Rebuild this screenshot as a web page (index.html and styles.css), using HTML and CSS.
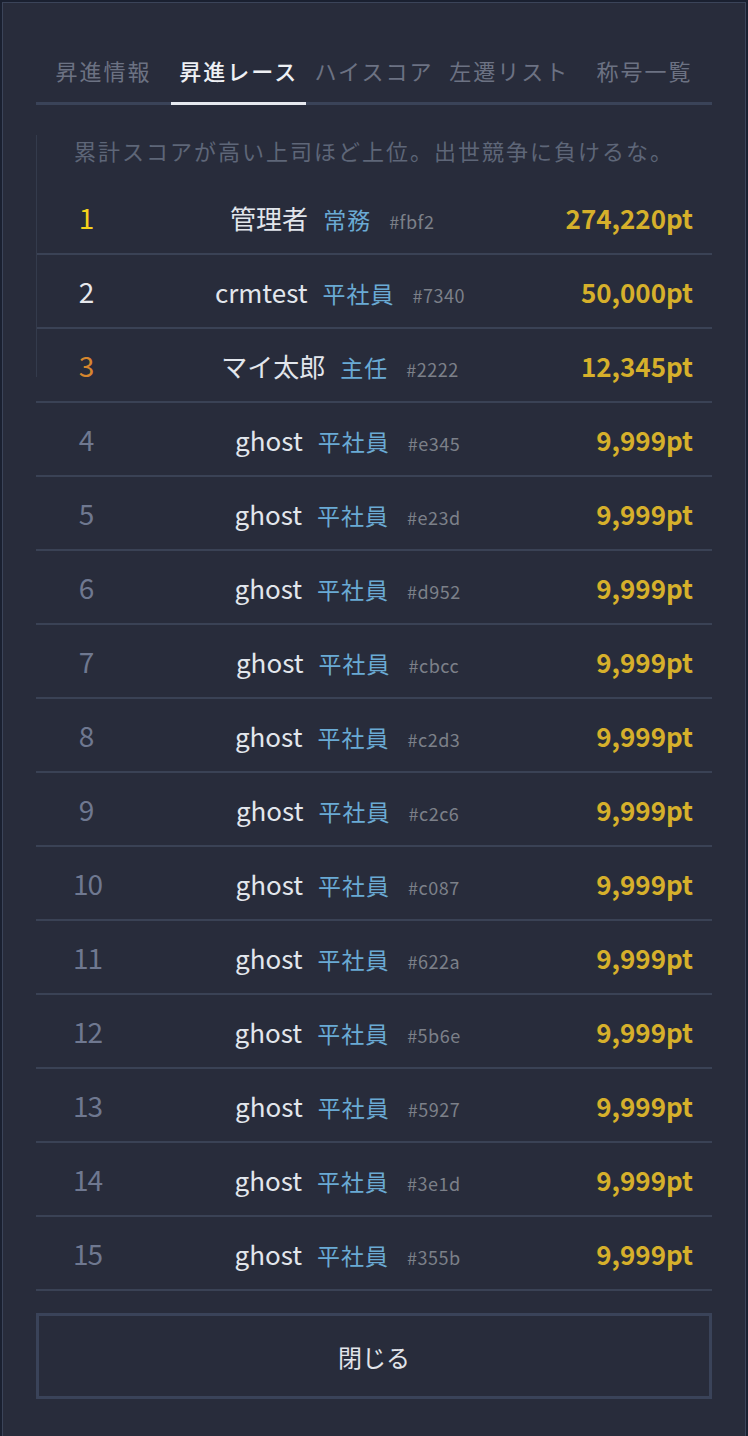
FILE: index.html
```html
<!DOCTYPE html>
<html>
<head>
  <meta charset="utf-8">
  <title>昇進レース</title>
  <meta name="viewport" content="width=device-width, initial-scale=1">
<link rel="stylesheet" href="styles.css">
</head>
<body>
<div class="modal">
  <!-- tabs -->
  <div class="tabs">
    <div class="tab">昇進情報</div>
    <div class="tab tab-active">昇進レース</div>
    <div class="tab">ハイスコア</div>
    <div class="tab">左遷リスト</div>
    <div class="tab">称号一覧</div>
  </div>

  <div class="board">
    <div class="board-desc">累計スコアが高い上司ほど上位。出世競争に負けるな。</div>

    <div class="race-row">
      <div class="rank rank-1">1</div>
      <div class="who"><span class="name">管理者</span><span class="role">常務</span><span class="tag">#fbf2</span></div>
      <div class="score">274,220pt</div>
    </div>
    <div class="race-row">
      <div class="rank rank-2">2</div>
      <div class="who"><span class="name">crmtest</span><span class="role">平社員</span><span class="tag">#7340</span></div>
      <div class="score">50,000pt</div>
    </div>
    <div class="race-row">
      <div class="rank rank-3">3</div>
      <div class="who"><span class="name">マイ太郎</span><span class="role">主任</span><span class="tag">#2222</span></div>
      <div class="score">12,345pt</div>
    </div>
    <div class="race-row">
      <div class="rank">4</div>
      <div class="who"><span class="name">ghost</span><span class="role">平社員</span><span class="tag">#e345</span></div>
      <div class="score">9,999pt</div>
    </div>
    <div class="race-row">
      <div class="rank">5</div>
      <div class="who"><span class="name">ghost</span><span class="role">平社員</span><span class="tag">#e23d</span></div>
      <div class="score">9,999pt</div>
    </div>
    <div class="race-row">
      <div class="rank">6</div>
      <div class="who"><span class="name">ghost</span><span class="role">平社員</span><span class="tag">#d952</span></div>
      <div class="score">9,999pt</div>
    </div>
    <div class="race-row">
      <div class="rank">7</div>
      <div class="who"><span class="name">ghost</span><span class="role">平社員</span><span class="tag">#cbcc</span></div>
      <div class="score">9,999pt</div>
    </div>
    <div class="race-row">
      <div class="rank">8</div>
      <div class="who"><span class="name">ghost</span><span class="role">平社員</span><span class="tag">#c2d3</span></div>
      <div class="score">9,999pt</div>
    </div>
    <div class="race-row">
      <div class="rank">9</div>
      <div class="who"><span class="name">ghost</span><span class="role">平社員</span><span class="tag">#c2c6</span></div>
      <div class="score">9,999pt</div>
    </div>
    <div class="race-row">
      <div class="rank">10</div>
      <div class="who"><span class="name">ghost</span><span class="role">平社員</span><span class="tag">#c087</span></div>
      <div class="score">9,999pt</div>
    </div>
    <div class="race-row">
      <div class="rank">11</div>
      <div class="who"><span class="name">ghost</span><span class="role">平社員</span><span class="tag">#622a</span></div>
      <div class="score">9,999pt</div>
    </div>
    <div class="race-row">
      <div class="rank">12</div>
      <div class="who"><span class="name">ghost</span><span class="role">平社員</span><span class="tag">#5b6e</span></div>
      <div class="score">9,999pt</div>
    </div>
    <div class="race-row">
      <div class="rank">13</div>
      <div class="who"><span class="name">ghost</span><span class="role">平社員</span><span class="tag">#5927</span></div>
      <div class="score">9,999pt</div>
    </div>
    <div class="race-row">
      <div class="rank">14</div>
      <div class="who"><span class="name">ghost</span><span class="role">平社員</span><span class="tag">#3e1d</span></div>
      <div class="score">9,999pt</div>
    </div>
    <div class="race-row">
      <div class="rank">15</div>
      <div class="who"><span class="name">ghost</span><span class="role">平社員</span><span class="tag">#355b</span></div>
      <div class="score">9,999pt</div>
    </div>
  </div>

  <button class="close-btn">閉じる</button>
</div>
</body>
</html>
```

FILE: styles.css
```css
body {
  background: #1a2030;
  font-family: "Noto Sans CJK JP", "Noto Sans", sans-serif;
  margin: 0;
  padding: 2px;
  overflow: hidden;
}

.modal {
  width: 676px;
  height: 1381px;
  padding: 52px 33px 0 33px;
  background: #282c3b;
  border: 1px solid #3b4459;
}

/* Tabs */
.tabs {
  display: flex;
  border-bottom: 3px solid #3a4358;
}

.tab {
  flex: 1;
  text-align: center;
  font-size: 22px;
  letter-spacing: 2px;
  line-height: 30px;
  padding-bottom: 17px;
  margin-bottom: -3px;
  color: #6c7283;
  border-bottom: 3px solid transparent;
}

.tab-active {
  color: #eef0f4;
  font-weight: 500;
  border-bottom-color: #e6e9ef;
}

/* Ranking board */
.board {
  position: relative;
  margin-top: 30px;
}

.board::before {
  content: "";
  position: absolute;
  top: 0;
  left: 0;
  width: 1px;
  height: 242px;
  background: #343b4c;
}

.board-desc {
  text-align: center;
  font-size: 22px;
  letter-spacing: 2px;
  line-height: 30px;
  padding: 0 0 16px;
  color: #5e6678;
}

.race-row {
  display: flex;
  align-items: center;
  height: 72px;
  padding: 0 19px 0 37px;
  border-bottom: 2px solid #3a4255;
}

.rank {
  width: 26px;
  text-align: center;
  font-size: 28px;
  letter-spacing: -1px;
  color: #6f7890;
}

.rank-1 { color: #f6d21c; }
.rank-2 { color: #e6e8ec; }
.rank-3 { color: #d6862e; }

.who {
  flex: 1;
  text-align: center;
  white-space: nowrap;
}

.name {
  font-size: 26px;
  color: #e2e6ec;
}

.role {
  font-size: 23px;
  letter-spacing: 1px;
  color: #6aaad4;
  margin-left: 15px;
}

.tag {
  font-size: 18px;
  letter-spacing: 0.5px;
  color: #7c8089;
  margin-left: 18px;
}

.score {
  font-size: 26px;
  font-weight: bold;
  color: #d6b02b;
}

/* Close button */
.close-btn {
  display: block;
  width: 100%;
  height: 86px;
  margin-top: 22px;
  background: transparent;
  border: 3px solid #3a4359;
  color: #e2e5ea;
  font-family: inherit;
  font-size: 24px;
  cursor: pointer;
}
```
